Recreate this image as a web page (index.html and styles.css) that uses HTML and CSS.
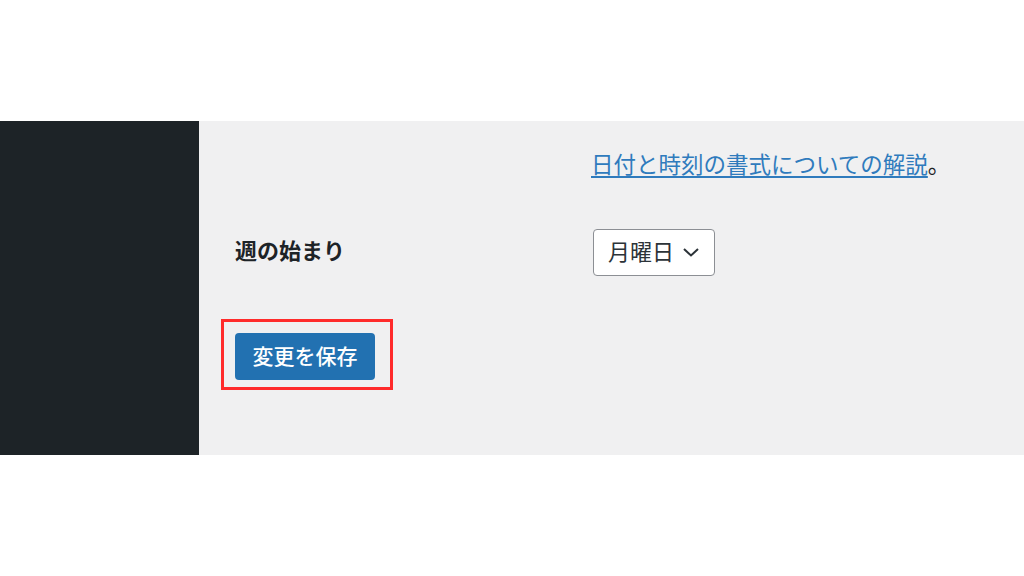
FILE: index.html
```html
<!DOCTYPE html>
<html lang="ja">
<head>
<meta charset="utf-8">
<link rel="stylesheet" href="styles.css">
</head>
<body>
<div class="top-space"></div>
<div class="band">
  <aside class="sidebar"></aside>
  <main class="content">
    <div class="row row-link">
      <div class="label"></div>
      <div class="field"><a href="#" class="doc-link">日付と時刻の書式についての解説</a>。</div>
    </div>
    <div class="row row-week">
      <div class="label">週の始まり</div>
      <div class="field">
        <div class="select">
          <span class="select-text">月曜日</span>
          <svg class="chev" width="18" height="12" viewBox="0 0 18 12"><path d="M2 3 L9 9.5 L16 3" fill="none" stroke="#2c3338" stroke-width="2"/></svg>
        </div>
      </div>
    </div>
    <div class="submit-wrap">
      <div class="highlight">
        <button class="btn">変更を保存</button>
      </div>
    </div>
  </main>
</div>
</body>
</html>
```
FILE: styles.css
```css
html, body { margin: 0; padding: 0; }
body {
  width: 1024px;
  height: 576px;
  background: #ffffff;
  font-family: "Noto Sans CJK JP", "Noto Sans", sans-serif;
  color: #1d2327;
  overflow: hidden;
}
.top-space { height: 121px; }
.band {
  height: 334px;
  display: flex;
  background: #f0f0f1;
}
.sidebar {
  width: 199px;
  background: #1d2327;
  flex: none;
}
.content {
  flex: 1;
  padding-left: 36px;
  display: flex;
  flex-direction: column;
}
.row {
  display: flex;
  align-items: center;
}
.label {
  width: 358px;
  flex: none;
  font-size: 22px;
  font-weight: 700;
}
.row-week .label { padding-bottom: 7px; }
.row-link {
  margin-top: 26px;
  font-size: 22.5px;
  line-height: 32px;
}
.row-link .label { width: 356px; }
.doc-link {
  color: #2f7bbd;
  text-decoration: underline;
  text-underline-offset: 3px;
  text-decoration-thickness: 2px;
}
.row-week { margin-top: 50px; }
.select {
  box-sizing: border-box;
  width: 122px;
  height: 47px;
  border: 1px solid #8c8f94;
  border-radius: 4px;
  background: #fff;
  display: flex;
  align-items: center;
  padding-left: 14px;
  font-size: 22px;
  color: #2c3338;
  gap: 8px;
}
.select-text { padding-bottom: 5px; }
.chev { margin-top: -2px; }
.submit-wrap {
  margin-top: 43px;
  margin-left: -14px;
  display: flex;
}
.highlight {
  border: 3px solid #ff2b2b;
  padding: 11px 15px 7px 11px;
}
.btn {
  display: block;
  width: 140px;
  height: 47px;
  border: none;
  border-radius: 4px;
  background: #2271b1;
  color: #fff;
  font-family: "Noto Sans CJK JP", "Noto Sans", sans-serif;
  font-size: 21px;
  font-weight: 500;
  padding: 0 0 4px 0;
}
```
